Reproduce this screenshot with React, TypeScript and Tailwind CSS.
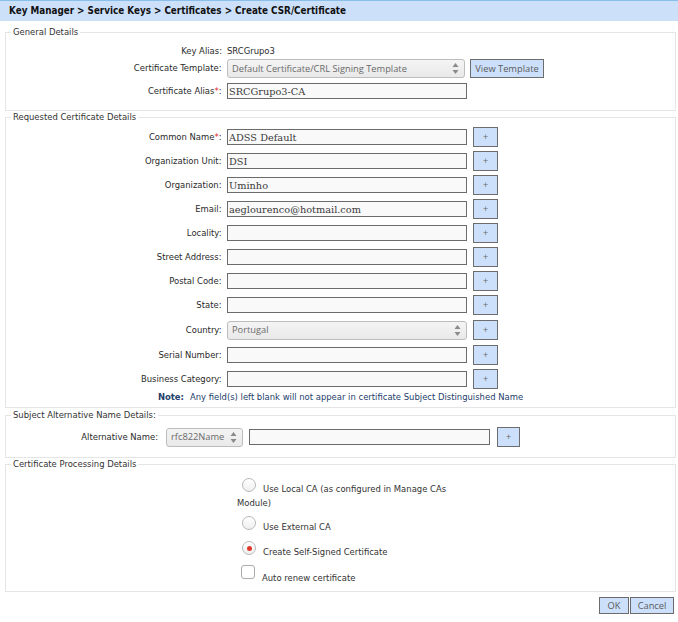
import React from "react";

// label font: narrow verdana-like; controls use open sans / serif like the original page
const sans = "font-['DejaVu_Sans_Condensed','DejaVu_Sans',sans-serif]";
const ctl = "font-['Open_Sans','Noto_Sans',sans-serif]";
const serif = "font-['DejaVu_Serif','Liberation_Serif',serif]";

function Arrows() {
  return (
    <svg width="7" height="13" viewBox="0 0 7 13" className="shrink-0">
      <path d="M3.5 1 L6.5 5 L0.5 5 Z" fill="#8a8a8a" />
      <path d="M3.5 12 L6.5 8 L0.5 8 Z" fill="#8a8a8a" />
    </svg>
  );
}

function SelectBox({ value, className }: { value: string; className: string }) {
  return (
    <div
      className={`flex h-[19px] shrink-0 items-center justify-between rounded-[3px] border border-[#bdbdbd] bg-gradient-to-b from-[#f4f4f4] to-[#e9e9e9] pl-[4px] pr-[5px] text-[9.3px] text-[#6a6a6a] ${ctl} ${className}`}
    >
      <span>{value}</span>
      <Arrows />
    </div>
  );
}

function TextBox({ value = "", className = "w-[240px]" }: { value?: string; className?: string }) {
  return (
    <input
      readOnly
      value={value}
      className={`h-[16px] shrink-0 border border-[#6b6b6b] bg-[#f9f9f9] px-[1px] text-[9.75px] leading-[14px] text-[#3a3a3a] outline-none ${serif} ${className}`}
    />
  );
}

function Plus({ className = "ml-[6px] w-[25px]" }: { className?: string }) {
  return (
    <button
      className={`flex h-[20px] shrink-0 items-center justify-center border border-[#6d6d6d] bg-[#cce0fb] text-[9px] text-[#666] ${ctl} ${className}`}
    >
      +
    </button>
  );
}

function Row({
  label,
  required,
  className = "h-[20px]",
  children,
}: {
  label: string;
  required?: boolean;
  className?: string;
  children: React.ReactNode;
}) {
  return (
    <div className={`flex items-center ${className}`}>
      <div className="w-[216px] shrink-0 pr-[0.5px] text-right">
        {label}
        {required ? <span className="text-[#e3262b]">*</span> : null}:
      </div>
      <div className="ml-[5px] flex items-center">{children}</div>
    </div>
  );
}

function Legend({ children }: { children: React.ReactNode }) {
  return <legend className="ml-[5px] px-[2px] leading-[12px] text-[#333]">{children}</legend>;
}

function Radio({ checked }: { checked?: boolean }) {
  return (
    <span className="relative ml-[5px] mr-[7px] inline-block h-[14px] w-[14px] rounded-full border border-[#b9b9b9] bg-gradient-to-b from-white to-[#efefef]">
      {checked ? (
        <span className="absolute left-[3.5px] top-[3.5px] h-[5px] w-[5px] rounded-full bg-[#e0392b]" />
      ) : null}
    </span>
  );
}

const fields: { label: string; value?: string; required?: boolean }[] = [
  { label: "Common Name", value: "ADSS Default", required: true },
  { label: "Organization Unit", value: "DSI" },
  { label: "Organization", value: "Uminho" },
  { label: "Email", value: "aeglourenco@hotmail.com" },
  { label: "Locality" },
  { label: "Street Address" },
  { label: "Postal Code" },
  { label: "State" },
];

export default function App() {
  return (
    <div className={`w-[678px] bg-white pb-[7px] text-[9.4px] text-[#2a2a2a] ${sans}`}>
      <div className="h-[21px] border-t border-[#88bfec] bg-[#cce0fa] pl-[9px] text-[9.8px] font-bold leading-[20px] text-[#111]">
        Key Manager &gt; Service Keys &gt; Certificates &gt; Create CSR/Certificate
      </div>

      <fieldset className="ml-[5px] mr-[2px] mt-[5px] border border-[#e5e5e5] pb-[11px]">
        <Legend>General Details</Legend>
        <div className="pt-[5px]">
          <div className="flex h-[16px] items-center">
            <div className="w-[216px] shrink-0 text-right">Key Alias:</div>
            <div className="ml-[5px]">SRCGrupo3</div>
          </div>
          <Row label="Certificate Template" className="h-[19px]">
            <SelectBox value="Default Certificate/CRL Signing Template" className="w-[238px]" />
            <button
              className={`ml-[5px] h-[19px] w-[74px] border border-[#6d6d6d] bg-[#cce0fb] text-[9.3px] text-[#5a5a5a] ${ctl}`}
            >
              View Template
            </button>
          </Row>
          <Row label="Certificate Alias" required className="mt-[5px] h-[16px]">
            <TextBox value="SRCGrupo3-CA" />
          </Row>
        </div>
      </fieldset>

      <fieldset className="ml-[5px] mr-[2px] border border-[#e5e5e5] pb-[4px]">
        <Legend>Requested Certificate Details</Legend>
        <div className="flex flex-col gap-[4px] pt-[4px]">
          {fields.map((f) => (
            <Row key={f.label} label={f.label} required={f.required}>
              <TextBox value={f.value} />
              <Plus />
            </Row>
          ))}
          <Row label="Country" className="h-[22px]">
            <SelectBox value="Portugal" className="w-[240px]" />
            <Plus />
          </Row>
          <Row label="Serial Number">
            <TextBox />
            <Plus />
          </Row>
          <Row label="Business Category">
            <TextBox />
            <Plus />
          </Row>
        </div>
        <div className="mt-[2px] text-center leading-[12px] text-[#24406a]">
          <span className="font-bold">Note:</span>
          <span className="ml-[6px]">Any field(s) left blank will not appear in certificate Subject Distinguished Name</span>
        </div>
      </fieldset>

      <fieldset className="ml-[5px] mr-[2px] mt-[1px] border border-[#e5e5e5] pb-[10px]">
        <Legend>Subject Alternative Name Details:</Legend>
        <div className="mt-[6px] flex h-[20px] items-center">
          <div className="w-[152px] shrink-0 text-right">Alternative Name:</div>
          <SelectBox value="rfc822Name" className="ml-[8px] w-[77px]" />
          <TextBox className="ml-[6px] w-[241px]" />
          <Plus className="ml-[7px] w-[23px]" />
        </div>
      </fieldset>

      <fieldset className="ml-[5px] mr-[2px] border border-[#e5e5e5] pb-[6px]">
        <Legend>Certificate Processing Details</Legend>
        <div className="ml-[231px] w-[233px] pt-[8px] leading-[14px] text-[#333]">
          <div>
            <Radio />
            Use Local CA (as configured in Manage CAs Module)
          </div>
          <div className="mt-[6px]">
            <Radio />
            Use External CA
          </div>
          <div className="mt-[7px]">
            <Radio checked />
            Create Self-Signed Certificate
          </div>
          <div className="mt-[6px]">
            <span className="ml-[4px] mr-[7px] inline-block h-[14px] w-[14px] rounded-[3px] border border-[#ababab] bg-white align-[2px]" />
            Auto renew certificate
          </div>
        </div>
      </fieldset>

      <div className={`mr-[4px] mt-[5px] flex justify-end gap-[1px] text-[9.3px] text-[#5a5a5a] ${ctl}`}>
        <button className="h-[17px] w-[30px] border border-[#6b6b6b] bg-[#cce0fb]">OK</button>
        <button className="h-[17px] w-[44px] border border-[#6b6b6b] bg-[#cce0fb]">Cancel</button>
      </div>
    </div>
  );
}
